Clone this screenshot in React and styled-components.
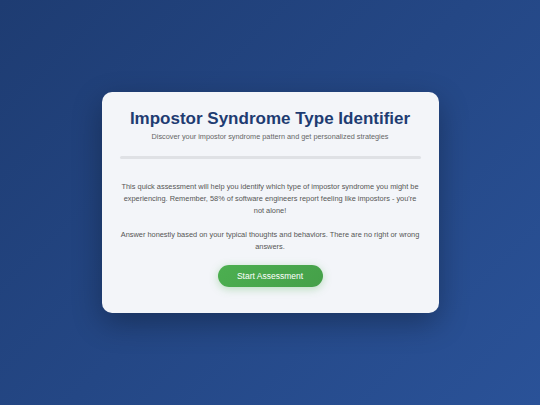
import React from "react"
import styled, { createGlobalStyle } from "styled-components"

export default function App() {
  return (
    <Page>
      <GlobalStyle />
      <Card>
        <Header>
          <Title>Impostor Syndrome Type Identifier</Title>
          <Subtitle>Discover your impostor syndrome pattern and get personalized strategies</Subtitle>
        </Header>
        <ProgressTrack>
          <ProgressFill $pct={0} />
        </ProgressTrack>
        <Intro>
          <Text>
            This quick assessment will help you identify which type of impostor syndrome you might be
            experiencing. Remember, 58% of software engineers report feeling like impostors - you're
            not alone!
          </Text>
          <Text>
            Answer honestly based on your typical thoughts and behaviors. There are no right or wrong
            answers.
          </Text>
          <StartButton>Start Assessment</StartButton>
        </Intro>
      </Card>
    </Page>
  )
}

const GlobalStyle = createGlobalStyle`
  * { box-sizing: border-box; }
  body {
    margin: 0;
    font-family: "Liberation Sans", Arial, sans-serif;
  }
`

const Page = styled.div`
  width: 100vw;
  min-height: 100vh;
  display: flex;
  align-items: center;
  justify-content: center;
  background: linear-gradient(135deg, #1e3c72 0%, #2a5298 100%);
`

const Card = styled.div`
  width: 337px;
  background: #f3f5f9;
  border-radius: 10px;
  padding: 17px 18px 26px;
  box-shadow: 0 10px 30px rgba(0, 0, 0, 0.3);
`

const Header = styled.div`
  text-align: center;
  margin-bottom: 14px;
`

const Title = styled.h1`
  margin: 0 0 3px;
  font-size: 17px;
  line-height: 20px;
  font-weight: 700;
  color: #1e3c72;
`

const Subtitle = styled.p`
  margin: 0;
  font-size: 7.3px;
  line-height: 10px;
  color: #666;
`

const ProgressTrack = styled.div`
  height: 3px;
  border-radius: 2px;
  background: #dfe1e5;
  overflow: hidden;
  margin-bottom: 22px;
`

const ProgressFill = styled.div`
  height: 100%;
  width: ${p => p.$pct}%;
  background: #4caf50;
`

const Intro = styled.div`
  display: flex;
  flex-direction: column;
  align-items: center;
  text-align: center;
`

const Text = styled.p`
  margin: 0 0 12px;
  font-size: 7.4px;
  line-height: 12px;
  color: #555;
`

const StartButton = styled.button`
  width: 105px;
  height: 22px;
  border: none;
  border-radius: 11px;
  background: linear-gradient(135deg, #4caf50, #45a049);
  color: #fff;
  font-family: inherit;
  font-size: 8.5px;
  box-shadow: 0 2px 8px rgba(76, 175, 80, 0.35);
  cursor: pointer;
`
